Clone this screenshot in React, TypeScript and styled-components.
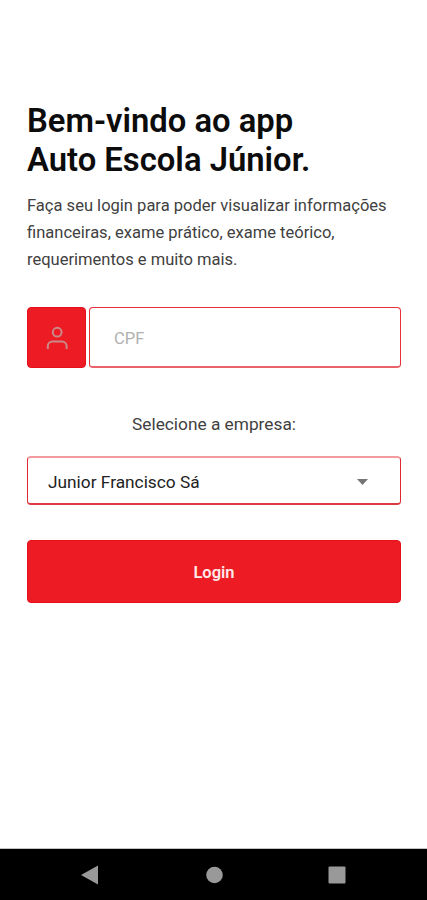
import React from "react";
import styled, { createGlobalStyle } from "styled-components";

const GlobalStyle = createGlobalStyle`
  * { box-sizing: border-box; }
  body { margin: 0; background: #fff; font-family: Roboto, sans-serif; }
  button, input { font-family: inherit; }
`;

const Screen = styled.div`
  display: flex;
  flex-direction: column;
  width: 427px;
  height: 900px;
  background: #fff;
  overflow: hidden;
`;

const Content = styled.main`
  flex: 1;
  display: flex;
  flex-direction: column;
  padding: 102px 26px 0 27px;
`;

const Title = styled.h1`
  margin: 0;
  font-size: 32.8px;
  line-height: 38.5px;
  font-weight: 600;
  color: #0c0c0c;
  white-space: nowrap;
`;

const Intro = styled.p`
  margin: 13px 0 0;
  font-size: 16.55px;
  line-height: 27px;
  color: #414141;
  white-space: nowrap;
`;

const Field = styled.label`
  display: flex;
  gap: 3px;
  height: 61px;
  margin-top: 34px;
`;

const IconBox = styled.span`
  display: flex;
  align-items: center;
  justify-content: center;
  width: 59px;
  border: 1px solid #e6101c;
  border-radius: 4px;
  background: #ed1c24;
`;

const Input = styled.input`
  flex: 1;
  min-width: 0;
  padding: 2px 24px 0;
  border: 1px solid #e8303a;
  border-bottom: 2px solid #e9626a;
  border-radius: 4px;
  outline: none;
  font-size: 16.5px;
  &::placeholder { color: #b0b0b0; opacity: 1; }
`;

const SelectLabel = styled.p`
  margin: 43px 0 0;
  text-align: center;
  font-size: 17.3px;
  line-height: 27px;
  color: #414141;
`;

const Select = styled.button`
  display: flex;
  align-items: center;
  justify-content: space-between;
  height: 49px;
  margin-top: 18px;
  padding: 2px 32px 0 20px;
  border: 1px solid #e02a33;
  border-top: 2px solid #f39a9e;
  border-bottom: 2px solid #dc3840;
  border-radius: 4px;
  background: #fff;
  font-size: 17.3px;
  color: #222;
`;

const LoginButton = styled.button`
  height: 63px;
  margin-top: 35px;
  padding: 2px 0 0;
  border: 1px solid #e6101c;
  border-radius: 4px;
  background: #ed1c24;
  color: #ffe9e9;
  font-size: 16.5px;
  font-weight: 600;
`;

const NavBar = styled.nav`
  display: flex;
  align-items: center;
  justify-content: space-between;
  height: 52px;
  padding: 0 81px;
  border-top: 1px solid #c4c4c4;
  background: #000;
`;

export default function App() {
  return (
    <Screen>
      <GlobalStyle />
      <Content>
        <Title>Bem-vindo ao app<br />Auto Escola Júnior.</Title>
        <Intro>
          Faça seu login para poder visualizar informações<br />
          financeiras, exame prático, exame teórico,<br />
          requerimentos e muito mais.
        </Intro>
        <Field>
          <IconBox>
            <svg width="28" height="28" viewBox="0 0 28 28" fill="none" stroke="#c88b8a" strokeWidth="2">
              <circle cx="14.2" cy="8.2" r="4.4" />
              <path d="M4.8 25v-2.8a4.6 4.6 0 0 1 4.6-4.6h9.6a4.6 4.6 0 0 1 4.6 4.6V25" />
            </svg>
          </IconBox>
          <Input placeholder="CPF" />
        </Field>
        <SelectLabel>Selecione a empresa:</SelectLabel>
        <Select type="button">
          Junior Francisco Sá
          <svg width="11" height="6" viewBox="0 0 11 6"><path d="M0 0h11L5.5 6z" fill="#757575" /></svg>
        </Select>
        <LoginButton type="button">Login</LoginButton>
      </Content>
      <NavBar>
        <svg width="18" height="20" viewBox="0 0 18 20"><path d="M17 0.5v19L0 10z" fill="#999" /></svg>
        <svg width="18" height="18" viewBox="0 0 18 18"><circle cx="9.5" cy="9" r="8.3" fill="#999" /></svg>
        <svg width="18" height="18" viewBox="0 0 18 18"><rect x="0.5" y="0.5" width="17" height="17" rx="1" fill="#999" /></svg>
      </NavBar>
    </Screen>
  );
}
